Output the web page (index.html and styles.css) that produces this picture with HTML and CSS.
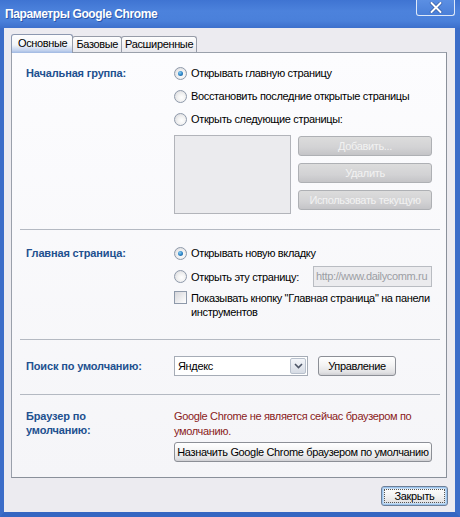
FILE: index.html
```html
<!DOCTYPE html>
<html lang="ru">
<head>
<meta charset="utf-8">
<title>Параметры Google Chrome</title>
<link rel="stylesheet" href="styles.css">
</head>
<body>
<div class="win">
  <div class="titlebar">
    <span class="title">Параметры Google Chrome</span>
    <span class="close"><svg width="14" height="11" viewBox="0 0 14 11"><path d="M2.5 1 L11.5 10 M11.5 1 L2.5 10" stroke="#33599f" stroke-width="3.4" stroke-linecap="round"/><path d="M2.5 1 L11.5 10 M11.5 1 L2.5 10" stroke="#fff" stroke-width="2" stroke-linecap="round"/></svg></span>
  </div>
  <div class="frame">
    <div class="client">
      <div class="tabs">
        <span class="tab active">Основные</span>
        <span class="tab">Базовые</span>
        <span class="tab">Расширенные</span>
      </div>
      <div class="panel">
        <div class="sec sec1">
          <div class="label">Начальная группа:</div>
          <div class="content">
            <div class="row"><span class="radio checked"></span><span>Открывать главную страницу</span></div>
            <div class="row"><span class="radio"></span><span>Восстановить последние открытые страницы</span></div>
            <div class="row"><span class="radio"></span><span>Открыть следующие страницы:</span></div>
            <div class="pages">
              <div class="listbox"></div>
              <div class="btncol">
                <span class="btn disabled">Добавить...</span>
                <span class="btn disabled">Удалить</span>
                <span class="btn disabled">Использовать текущую</span>
              </div>
            </div>
          </div>
        </div>
        <div class="sep"></div>
        <div class="sec sec2">
          <div class="label">Главная страница:</div>
          <div class="content">
            <div class="row"><span class="radio checked"></span><span>Открывать новую вкладку</span></div>
            <div class="row row-url"><span class="radio"></span><span>Открыть эту страницу:</span><span class="url">http://www.dailycomm.ru</span></div>
            <div class="row row-check"><span class="check"></span><span class="multi">Показывать кнопку "Главная страница" на панели<br>инструментов</span></div>
          </div>
        </div>
        <div class="sep"></div>
        <div class="sec sec3">
          <div class="label">Поиск по умолчанию:</div>
          <div class="content search">
            <div class="select"><span class="sel-text">Яндекс</span><span class="arrow"><svg width="9" height="6" viewBox="0 0 9 6"><path d="M1 1 L4.5 4.5 L8 1" fill="none" stroke="#4d5566" stroke-width="1.6"/></svg></span></div>
            <span class="btn manage">Управление</span>
          </div>
        </div>
        <div class="sep"></div>
        <div class="sec sec4">
          <div class="label">Браузер по<br>умолчанию:</div>
          <div class="content">
            <div class="warn">Google Chrome не является сейчас браузером по<br>умолчанию.</div>
            <span class="btn wide">Назначить Google Chrome браузером по умолчанию</span>
          </div>
        </div>
      </div>
      <div class="footer">
        <span class="btn close-btn"><span class="focus">Закрыть</span></span>
      </div>
    </div>
  </div>
</div>
</body>
</html>
```

FILE: styles.css
```css
* { box-sizing: border-box; }
html, body { margin: 0; padding: 0; }
body {
  width: 460px;
  height: 517px;
  overflow: hidden;
  font-family: "Liberation Sans", Arial, sans-serif;
  font-size: 11px;
  letter-spacing: -0.35px;
  color: #000;
  background: #3a6bc6;
}
.win {
  width: 460px;
  height: 517px;
  display: flex;
  flex-direction: column;
}
.titlebar {
  height: 28px;
  flex: none;
  display: flex;
  justify-content: space-between;
  align-items: flex-start;
  background: linear-gradient(#3f74d2 0%, #4c82dc 40%, #4a80da 75%, #3d70cc 100%);
  padding: 0 5px 0 5px;
}
.title {
  font-weight: bold;
  font-size: 12px;
  letter-spacing: -0.4px;
  color: #fff;
  line-height: 14px;
  margin-top: 7px;
  text-shadow: 1px 1px 0 #2a55a8;
}
.close {
  width: 39px;
  height: 16px;
  border: 1px solid #dfe9f8;
  border-top: none;
  border-radius: 0 0 3px 3px;
  background: linear-gradient(#5b8fe3, #4a7fd8);
  display: flex;
  align-items: center;
  justify-content: center;
  padding-bottom: 1px;
}
.frame {
  flex: 1;
  border-left: 4px solid #3c6dc8;
  border-right: 5px solid #3c6dc8;
  border-bottom: 5px solid #3566c2;
  box-shadow: inset 1px 0 0 #7ea4e6, inset -1px 0 0 #7ea4e6, inset 0 -1px 0 #7ea4e6;
  display: flex;
}
.client {
  flex: 1;
  background: #ecebf0;
  padding: 6px 8px 0 7px;
  display: flex;
  flex-direction: column;
}
.tabs {
  height: 18px;
  display: flex;
  align-items: flex-end;
  position: relative;
  z-index: 2;
}
.tab {
  height: 16px;
  padding: 0 3px 0 3px;
  border: 1px solid #979ca8;
  border-bottom: none;
  border-radius: 3px 3px 0 0;
  background: linear-gradient(#fefefe, #e7e7ec);
  line-height: 15px;
  margin-left: -1px;
}
.tab.active {
  height: 19px;
  margin-bottom: -1px;
  margin-left: 0;
  padding: 0 5px 0 6px;
  line-height: 17px;
  border-color: #8c98b0;
  background: linear-gradient(#fdfdfe 0%, #f3f5f9 55%, #c4d3ee 85%, #9fb8e2 100%);
}
.panel {
  height: 426px;
  border: 1px solid #9aa0ab;
  border-right-color: #8a909a;
  border-bottom-color: #8a909a;
  background: linear-gradient(#fcfcfe, #f5f5f8);
  display: flex;
  flex-direction: column;
}
.sec {
  display: grid;
  grid-template-columns: 148px 258px;
  padding: 0 14px;
}
.label {
  color: #21508f;
  font-weight: bold;
  letter-spacing: -0.15px;
  line-height: 14px;
}
.sep {
  height: 1px;
  background: #b4b9c2;
  margin: 0 6px 0 8px;
}
.content { display: flex; flex-direction: column; }
.row {
  display: flex;
  align-items: center;
  height: 14px;
  line-height: 14px;
  white-space: nowrap;
}
.radio {
  width: 13px;
  height: 13px;
  border-radius: 50%;
  border: 1px solid #8e99aa;
  background: radial-gradient(circle at 60% 60%, #ffffff 0%, #f2f2f2 40%, #d4d4d8 100%);
  margin-right: 4px;
  flex: none;
  position: relative;
}
.radio.checked::after {
  content: "";
  position: absolute;
  left: 3px;
  top: 3px;
  width: 5px;
  height: 5px;
  border-radius: 50%;
  background: radial-gradient(circle at 40% 35%, #8ed0f4 0%, #2e86c8 50%, #12508e 100%);
}
.check {
  width: 13px;
  height: 13px;
  border: 1px solid #8e99aa;
  background: linear-gradient(135deg, #d6d6da, #ffffff);
  margin-right: 4px;
  flex: none;
}

/* section 1 */
.sec1 { padding-top: 13px; padding-bottom: 15px; }
.sec1 .row + .row { margin-top: 9px; }
.pages { display: flex; gap: 7px; margin-top: 9px; }
.listbox {
  width: 117px;
  height: 79px;
  border: 1px solid #b2b4ba;
  background: #ebebee;
}
.btncol { display: flex; flex-direction: column; gap: 7px; padding-top: 1px; }

.btn {
  display: flex;
  align-items: center;
  justify-content: center;
  height: 20px;
  border: 1px solid #8c8f96;
  border-radius: 3px;
  background: linear-gradient(#ffffff 0%, #f4f4f4 45%, #e2e2e4 85%, #cfcfd3 100%);
  white-space: nowrap;
  line-height: 14px;
}
.btncol .btn { width: 134px; }
.btn.disabled {
  color: #f2f2f2;
  border-color: #aeb0b4;
  background: linear-gradient(#dcdcdc 0%, #d2d2d4 60%, #c4c4c7 100%);
}

/* section 2 */
.sec2 { padding-top: 16px; padding-bottom: 20px; }
.row-url { height: 21px; margin-top: 6px; }
.url {
  margin-left: auto;
  width: 119px;
  height: 21px;
  border: 1px solid #b9bcc2;
  background: #ebebee;
  color: #9c9ea4;
  line-height: 19px;
  padding-left: 2px;
  overflow: hidden;
}
.row-check { height: 28px; align-items: flex-start; margin-top: 4px; }
.multi { line-height: 14px; }

/* section 3 */
.sec3 { padding-top: 16px; padding-bottom: 18px; }
.sec3 .label { line-height: 20px; }
.search { flex-direction: row; gap: 10px; }
.select {
  width: 134px;
  height: 20px;
  border: 1px solid #a6acb6;
  background: #fff;
  display: flex;
  align-items: center;
  justify-content: space-between;
  padding: 1px 1px 1px 3px;
}
.arrow {
  width: 16px;
  height: 16px;
  border: 1px solid #b8c0cc;
  border-radius: 2px;
  background: linear-gradient(#f4f6fa, #d6dbe4);
  display: flex;
  align-items: center;
  justify-content: center;
}
.manage { width: 78px; }

/* section 4 */
.sec4 { padding-top: 14px; padding-bottom: 15px; }
.warn { color: #8a1b1b; line-height: 15px; margin-bottom: 3px; }
.wide { width: 258px; }

/* footer */
.footer {
  display: flex;
  justify-content: flex-end;
  margin-top: 8px;
  margin-right: -1px;
}
.close-btn {
  width: 67px;
  height: 20px;
  border-color: #6d7f99;
  box-shadow: inset 0 0 0 1px #9cc4ec, inset 0 0 0 2px #c6ddf4;
  padding: 2px;
}
.close-btn .focus {
  flex: 1;
  height: 100%;
  border: 1px dotted #555;
  display: flex;
  align-items: center;
  justify-content: center;
}
```
